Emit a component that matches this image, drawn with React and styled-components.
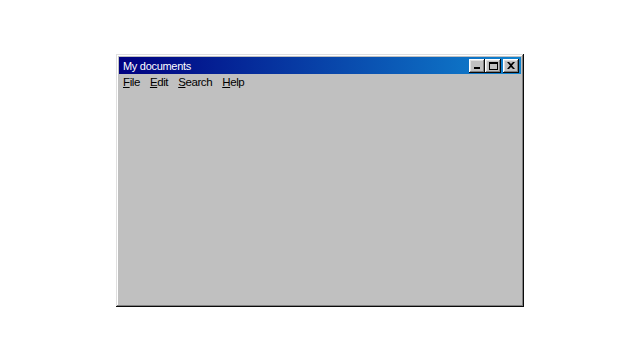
import React from 'react'
import styled, { createGlobalStyle } from 'styled-components'

const Global = createGlobalStyle`
  html, body { margin: 0; padding: 0; background: #fff; }
  body { font-family: "Liberation Sans", Arial, sans-serif; }
`

// fondo de la pagina
const Page = styled.div`
  width: 639px;
  height: 360px;
  padding: 54px 0 0 116px;
  box-sizing: border-box;
`

// ventana
const Window = styled.div`
  width: 408px;
  height: 253px;
  box-sizing: border-box;
  background: #c0c0c0;
  padding: 3px;
  display: flex;
  flex-direction: column;
  box-shadow: inset -1px -1px #0a0a0a, inset 1px 1px #dfdfdf,
    inset -2px -2px #808080, inset 2px 2px #ffffff;
`

const TitleBar = styled.div`
  height: 17px;
  background: linear-gradient(90deg, #000080, #1084d0);
  display: flex;
  align-items: center;
  justify-content: space-between;
  padding: 0 2px 0 4px;
`

const Title = styled.span`
  color: #fff;
  font-size: 11px;
  letter-spacing: -0.3px;
`

const Controls = styled.div`
  display: flex;
  align-items: center;
`

const CtrlBtn = styled.button`
  width: 16px;
  height: 14px;
  padding: 0;
  margin-left: ${({ gap }) => gap || 0}px;
  border: none;
  background: #c0c0c0;
  box-shadow: inset -1px -1px #0a0a0a, inset 1px 1px #ffffff,
    inset -2px -2px #808080, inset 2px 2px #dfdfdf;
  display: flex;
  align-items: center;
  justify-content: center;
`

const MenuBar = styled.div`
  display: flex;
  padding: 2px 0 0 4px;
`

const MenuItem = styled.span`
  font-size: 11.5px;
  letter-spacing: -0.4px;
  color: #000;
  margin-right: 10px;
  u { text-decoration: underline; text-underline-offset: 1px; }
`

const Body = styled.div`
  flex: 1;
`

const Min = () => (
  <svg width="8" height="7" viewBox="0 0 8 7">
    <rect x="1" y="5" width="6" height="2" fill="#000" />
  </svg>
)
const Max = () => (
  <svg width="9" height="9" viewBox="0 0 9 9">
    <rect x="0.5" y="1.5" width="8" height="7" fill="none" stroke="#000" />
    <rect x="0" y="1" width="9" height="2" fill="#000" />
  </svg>
)
const Close = () => (
  <svg width="8" height="7" viewBox="0 0 8 7">
    <path d="M0 0h2l2 2 2-2h2L5 3.5 8 7H6L4 5 2 7H0l3-3.5z" fill="#000" />
  </svg>
)

export default function App() {
  return (
    <Page>
      <Global />
      <Window>
        <TitleBar>
          <Title>My documents</Title>
          <Controls>
            <CtrlBtn><Min /></CtrlBtn>
            <CtrlBtn><Max /></CtrlBtn>
            <CtrlBtn gap={2}><Close /></CtrlBtn>
          </Controls>
        </TitleBar>
        <MenuBar>
          <MenuItem><u>F</u>ile</MenuItem>
          <MenuItem><u>E</u>dit</MenuItem>
          <MenuItem><u>S</u>earch</MenuItem>
          <MenuItem><u>H</u>elp</MenuItem>
        </MenuBar>
        <Body />
      </Window>
    </Page>
  )
}
